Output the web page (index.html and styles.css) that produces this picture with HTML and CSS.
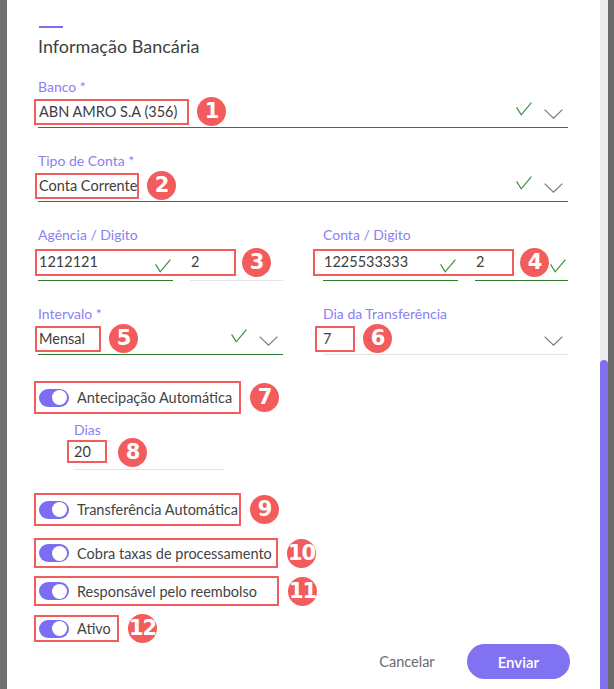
FILE: index.html
```html
<!DOCTYPE html>
<html lang="pt-BR">
<head>
  <meta charset="UTF-8">
  <meta name="viewport" content="width=device-width, initial-scale=1.0">
  <title>Informação Bancária</title>
  <link rel="stylesheet" href="styles.css">
</head>
<body>
  <div class="screen">
    <div class="edge edge-left"></div>

    <section class="modal">
      <div class="accent"></div>
      <h2 class="title">Informação Bancária</h2>

      <div class="field field-bank">
        <span class="field-label">Banco *</span>
        <div class="control is-valid">
          <span class="mark mark-bank">ABN AMRO S.A (356)</span>
          <span class="badge">1</span>
          <span class="fill"></span>
          <svg class="check" viewBox="0 0 16 14"><polyline points="0.6,5.4 5.2,12.8 15.4,0.6"/></svg>
          <svg class="chevron" viewBox="0 0 19 10"><polyline points="0.6,0.6 9.5,9.2 18.4,0.6"/></svg>
        </div>
      </div>

      <div class="field field-type">
        <span class="field-label">Tipo de Conta *</span>
        <div class="control is-valid">
          <span class="mark mark-type">Conta Corrente</span>
          <span class="badge">2</span>
          <span class="fill"></span>
          <svg class="check" viewBox="0 0 16 14"><polyline points="0.6,5.4 5.2,12.8 15.4,0.6"/></svg>
          <svg class="chevron" viewBox="0 0 19 10"><polyline points="0.6,0.6 9.5,9.2 18.4,0.6"/></svg>
        </div>
      </div>

      <div class="columns row-account">
        <div class="field">
          <span class="field-label">Agência / Digito</span>
          <div class="pair">
            <div class="control control-input is-valid">
              <span class="value">1212121</span>
              <span class="fill"></span>
              <svg class="check check-input" viewBox="0 0 16 14"><polyline points="0.6,5.4 5.2,12.8 15.4,0.6"/></svg>
            </div>
            <div class="control control-input">
              <span class="value">2</span>
            </div>
            <span class="mark-overlay overlay-agency"></span>
            <span class="badge badge-overlay badge-agency">3</span>
          </div>
        </div>
        <div class="field">
          <span class="field-label">Conta / Digito</span>
          <div class="pair">
            <div class="control control-input is-valid">
              <span class="value">1225533333</span>
              <span class="fill"></span>
              <svg class="check check-input" viewBox="0 0 16 14"><polyline points="0.6,5.4 5.2,12.8 15.4,0.6"/></svg>
            </div>
            <div class="control control-input is-valid">
              <span class="value">2</span>
              <span class="fill"></span>
              <svg class="check check-input" viewBox="0 0 16 14"><polyline points="0.6,5.4 5.2,12.8 15.4,0.6"/></svg>
            </div>
            <span class="mark-overlay overlay-account"></span>
            <span class="badge badge-overlay badge-account">4</span>
          </div>
        </div>
      </div>

      <div class="columns row-interval">
        <div class="field">
          <span class="field-label">Intervalo *</span>
          <div class="control is-valid">
            <span class="mark mark-interval">Mensal</span>
            <span class="badge">5</span>
            <span class="fill"></span>
            <svg class="check" viewBox="0 0 16 14"><polyline points="0.6,5.4 5.2,12.8 15.4,0.6"/></svg>
            <svg class="chevron" viewBox="0 0 19 10"><polyline points="0.6,0.6 9.5,9.2 18.4,0.6"/></svg>
          </div>
        </div>
        <div class="field">
          <span class="field-label">Dia da Transferência</span>
          <div class="control">
            <span class="mark mark-day">7</span>
            <span class="badge">6</span>
            <span class="fill"></span>
            <svg class="chevron" viewBox="0 0 19 10"><polyline points="0.6,0.6 9.5,9.2 18.4,0.6"/></svg>
          </div>
        </div>
      </div>

      <div class="toggle-line line-anticipation">
        <div class="toggle-box box-anticipation">
          <span class="switch"><span class="knob"></span></span>
          <span class="toggle-label">Antecipação Automática</span>
        </div>
        <span class="badge">7</span>
      </div>

      <div class="field field-days">
        <span class="field-label">Dias</span>
        <div class="control control-days">
          <span class="mark mark-days">20</span>
          <span class="badge">8</span>
        </div>
      </div>

      <div class="toggle-line line-transfer">
        <div class="toggle-box box-transfer">
          <span class="switch"><span class="knob"></span></span>
          <span class="toggle-label">Transferência Automática</span>
        </div>
        <span class="badge">9</span>
      </div>

      <div class="toggle-line line-fees">
        <div class="toggle-box box-fees">
          <span class="switch"><span class="knob"></span></span>
          <span class="toggle-label">Cobra taxas de processamento</span>
        </div>
        <span class="badge">10</span>
      </div>

      <div class="toggle-line line-refund">
        <div class="toggle-box box-refund">
          <span class="switch"><span class="knob"></span></span>
          <span class="toggle-label">Responsável pelo reembolso</span>
        </div>
        <span class="badge">11</span>
      </div>

      <div class="toggle-line line-active">
        <div class="toggle-box box-active">
          <span class="switch"><span class="knob"></span></span>
          <span class="toggle-label">Ativo</span>
        </div>
        <span class="badge">12</span>
      </div>

      <div class="actions">
        <button class="btn-cancel" type="button">Cancelar</button>
        <button class="btn-send" type="button">Enviar</button>
      </div>
    </section>

    <div class="scrollbar"><div class="thumb"></div></div>

    <div class="edge edge-right"></div>
  </div>
</body>
</html>
```

FILE: styles.css
```css
* {
  margin: 0;
  padding: 0;
  box-sizing: border-box;
}
body {
  background-color: #6f6f6f;
  font-family: Lato, "Noto Sans", sans-serif;
  color: #3d3d3d;
  overflow: hidden;
}
.screen {
  display: flex;
  height: 689px;
}

/* dimmed page behind the dialog */
.edge {
  width: 7px;
  background-color: #6f6f6f;
}
.edge-right {
  width: 6px;
  background-color: #6b6b6b;
}

/* dialog */
.modal {
  width: 593px;
  background-color: #fff;
  padding: 26px 32px 0 31px;
}
.accent {
  width: 24px;
  height: 2px;
  margin-left: 1px;
  background-color: #7c6cf0;
}
.title {
  margin-top: 6px;
  font-size: 18px;
  line-height: 24px;
  font-weight: normal;
  color: #3f3f3f;
}

/* fields */
.field {
  display: flex;
  flex-direction: column;
}
.field-bank {
  margin-top: 20px;
}
.field-type {
  margin-top: 24px;
}
.field-label {
  font-size: 14px;
  line-height: 18px;
  color: #8b80f3;
}
.control {
  display: flex;
  align-items: center;
  height: 32px;
  border-bottom: 1px solid #e4e4e4;
  font-size: 14.5px;
}
.control.is-valid {
  border-bottom-color: #2e7d32;
}
.control-input {
  height: 37px;
}
.value {
  line-height: 22px;
}
.control-input .value {
  margin-left: 1px;
}
.fill {
  flex: 1;
}
.check {
  width: 16px;
  height: 14px;
  flex: none;
  margin-bottom: 6px;
  fill: none;
  stroke: #3b8e3f;
  stroke-width: 1.2;
}
.check-input {
  margin-bottom: 0;
  margin-top: 7px;
  margin-right: 2px;
}
.chevron {
  width: 19px;
  height: 10px;
  flex: none;
  margin-left: 12px;
  margin-right: 5px;
  margin-top: 4px;
  fill: none;
  stroke: #7a7a7a;
  stroke-width: 1.2;
}

.columns {
  display: grid;
  grid-template-columns: 1fr 1fr;
  gap: 40px;
}
.row-account {
  margin-top: 24px;
}
.row-interval {
  margin-top: 24px;
}
.pair {
  position: relative;
  display: grid;
  grid-template-columns: 1fr 93px;
  gap: 17px;
}

/* annotation marks */
.mark {
  border: 2px solid #f35c5c;
  margin-left: -4px;
  padding-left: 3px;
  line-height: 22px;
  white-space: nowrap;
}
.mark-bank {
  width: 155px;
}
.mark-type {
  width: 104px;
  margin-left: -3px;
  padding-left: 2px;
}
.mark-interval {
  width: 66px;
  margin-left: -3px;
  padding-left: 2px;
}
.mark-day {
  width: 40px;
  margin-left: -8px;
  padding-left: 6px;
}
.mark-days {
  width: 40px;
  margin-left: -7px;
  padding-left: 5px;
  line-height: 19px;
}
.mark-overlay {
  position: absolute;
  top: 5px;
  height: 27px;
  width: 201px;
  border: 2px solid #f35c5c;
}
.overlay-agency {
  left: -3px;
}
.overlay-account {
  left: -10px;
}
.badge {
  flex: none;
  width: 29px;
  height: 29px;
  margin-left: 8px;
  border-radius: 50%;
  background-color: #f35c5c;
  color: #fff;
  font-family: "DejaVu Sans", sans-serif;
  font-weight: bold;
  font-size: 21px;
  line-height: 29px;
  letter-spacing: -1px;
  text-align: center;
}
.badge-overlay {
  position: absolute;
  top: 4px;
  margin-left: 0;
}
.badge-agency {
  left: 204px;
}
.badge-account {
  left: 197px;
}

/* toggles */
.toggle-line {
  display: flex;
  align-items: center;
}
.toggle-box {
  display: flex;
  align-items: center;
  margin-left: -4px;
  padding-left: 3px;
  border: 2px solid #f35c5c;
}
.switch {
  flex: none;
  width: 30px;
  height: 18px;
  padding: 0 2px;
  border-radius: 9px;
  background-color: #7b6ef2;
  display: flex;
  align-items: center;
  justify-content: flex-end;
}
.knob {
  width: 15px;
  height: 15px;
  border-radius: 50%;
  background-color: #fff;
}
.toggle-label {
  margin-left: 8px;
  font-size: 14.5px;
  color: #444;
  white-space: nowrap;
}
.toggle-line .badge {
  margin-left: 9px;
}
.line-anticipation {
  margin-top: 26px;
}
.box-anticipation,
.box-transfer {
  width: 207px;
  height: 33px;
}
.field-days {
  margin-top: 7px;
  margin-left: 36px;
  width: 150px;
}
.control-days {
  height: 31px;
  align-items: flex-start;
  padding-top: 1px;
}
.control-days .badge {
  margin-left: 11px;
  margin-top: -2px;
}
.line-transfer {
  margin-top: 23px;
}
.line-fees {
  margin-top: 12px;
}
.box-fees {
  width: 244px;
  height: 30px;
}
.line-refund {
  margin-top: 8px;
}
.box-refund {
  width: 245px;
  height: 30px;
}
.line-active {
  margin-top: 8px;
}
.box-active {
  width: 85px;
  height: 27px;
}

/* footer buttons */
.actions {
  display: flex;
  justify-content: flex-end;
  align-items: center;
  gap: 32px;
  margin-top: 1px;
  margin-right: -2px;
}
.actions button {
  border: none;
  background: none;
  font-family: inherit;
  cursor: pointer;
}
.btn-cancel {
  font-size: 14.5px;
  color: #6b6b6b;
}
.actions .btn-send {
  height: 35px;
  padding: 0 31px;
  border-radius: 18px;
  background-color: #8172f1;
  color: #fff;
  font-size: 15px;
  font-weight: 600;
}

/* scrollbar */
.scrollbar {
  width: 8px;
  background-color: #ececec;
  display: flex;
  flex-direction: column;
  padding-top: 360px;
}
.thumb {
  flex: 1;
  border-radius: 4px 4px 0 0;
  background-color: #8070f0;
}
```
